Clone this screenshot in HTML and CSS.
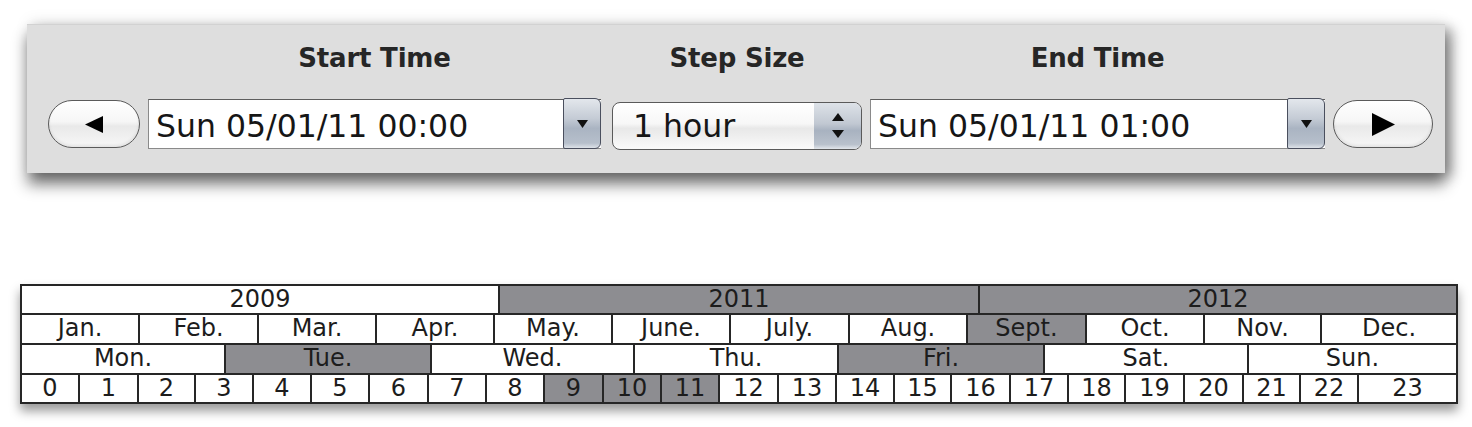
FILE: index.html
```html
<!DOCTYPE html>
<html>
<head>
<meta charset="utf-8">
<link rel="stylesheet" href="styles.css">
</head>
<body>
<div class="panel">
  <button class="pill pill-prev" type="button">
    <svg width="18" height="17" viewBox="0 0 18 17"><polygon points="0,8.5 18,0 18,17" fill="#000"/></svg>
  </button>
  <div class="group group-start">
    <div class="label">Start Time</div>
    <div class="combo">
      <span class="value">Sun 05/01/11 00:00</span>
      <span class="drop"><svg width="11" height="8" viewBox="0 0 11 8"><polygon points="0,0 11,0 5.5,8" fill="#111"/></svg></span>
    </div>
  </div>
  <div class="group group-step">
    <div class="label">Step Size</div>
    <div class="stepper">
      <span class="value">1 hour</span>
      <span class="spin"><svg width="12" height="26" viewBox="0 0 12 26"><polygon points="6,0 12,8 0,8" fill="#111"/><polygon points="0,17 12,17 6,25" fill="#111"/></svg></span>
    </div>
  </div>
  <div class="group group-end">
    <div class="label">End Time</div>
    <div class="combo">
      <span class="value">Sun 05/01/11 01:00</span>
      <span class="drop"><svg width="11" height="8" viewBox="0 0 11 8"><polygon points="0,0 11,0 5.5,8" fill="#111"/></svg></span>
    </div>
  </div>
  <button class="pill pill-next" type="button">
    <svg width="23" height="23" viewBox="0 0 23 23"><polygon points="0,0 23,11.5 0,23" fill="#000"/></svg>
  </button>
</div>

<div class="timeline">
  <div class="row row-years">
    <div class="cell">2009</div>
    <div class="cell on">2011</div>
    <div class="cell on">2012</div>
  </div>
  <div class="row row-months">
    <div class="cell">Jan.</div>
    <div class="cell">Feb.</div>
    <div class="cell">Mar.</div>
    <div class="cell">Apr.</div>
    <div class="cell">May.</div>
    <div class="cell">June.</div>
    <div class="cell">July.</div>
    <div class="cell">Aug.</div>
    <div class="cell on">Sept.</div>
    <div class="cell">Oct.</div>
    <div class="cell">Nov.</div>
    <div class="cell">Dec.</div>
  </div>
  <div class="row row-days">
    <div class="cell">Mon.</div>
    <div class="cell on">Tue.</div>
    <div class="cell">Wed.</div>
    <div class="cell">Thu.</div>
    <div class="cell on">Fri.</div>
    <div class="cell">Sat.</div>
    <div class="cell">Sun.</div>
  </div>
  <div class="row row-hours">
    <div class="cell">0</div>
    <div class="cell">1</div>
    <div class="cell">2</div>
    <div class="cell">3</div>
    <div class="cell">4</div>
    <div class="cell">5</div>
    <div class="cell">6</div>
    <div class="cell">7</div>
    <div class="cell">8</div>
    <div class="cell on">9</div>
    <div class="cell on">10</div>
    <div class="cell on">11</div>
    <div class="cell">12</div>
    <div class="cell">13</div>
    <div class="cell">14</div>
    <div class="cell">15</div>
    <div class="cell">16</div>
    <div class="cell">17</div>
    <div class="cell">18</div>
    <div class="cell">19</div>
    <div class="cell">20</div>
    <div class="cell">21</div>
    <div class="cell">22</div>
    <div class="cell">23</div>
  </div>
</div>
</body>
</html>
```
FILE: styles.css
```css
html, body {
  margin: 0;
  padding: 0;
  background: #ffffff;
}
body {
  font-family: "DejaVu Sans", "Liberation Sans", sans-serif;
  color: #1a1a1a;
  width: 1472px;
  height: 427px;
  overflow: hidden;
}

/* ---------- top control panel ---------- */
.panel {
  margin: 24px 0 0 27px;
  width: 1418px;
  height: 149px;
  box-sizing: border-box;
  padding: 18px 0 0 21px;
  background: #dedede;
  border-top: 1px solid #d2d2d2;
  display: flex;
  align-items: flex-start;
  box-shadow: 0 12px 14px rgba(0, 0, 0, 0.45), 8px 4px 12px rgba(0, 0, 0, 0.3), 0 -4px 14px rgba(0, 0, 0, 0.06);
}
.group {
  display: flex;
  flex-direction: column;
  align-items: center;
  gap: 26px;
}
.label {
  font-weight: bold;
  font-size: 26px;
  line-height: 30px;
  letter-spacing: -0.2px;
  color: #262626;
  white-space: nowrap;
}
.group-start { margin-left: 8px; width: 453px; }
.group-step { margin-left: 11px; width: 250px; }
.group-end { margin-left: 8px; width: 455px; }

.pill {
  margin: 57px 0 0 0;
  padding: 0;
  height: 48px;
  border: 1.5px solid #5a5a5a;
  border-radius: 24px;
  background: linear-gradient(#ffffff 0%, #f6f6f6 45%, #e9e9e9 55%, #f7f7f7 100%);
  display: flex;
  align-items: center;
  justify-content: center;
  box-shadow: inset 0 -2px 3px rgba(0, 0, 0, 0.08);
}
.pill-prev { width: 92px; }
.pill-next { width: 100px; margin-left: 8px; }

.combo {
  width: 100%;
  height: 50px;
  box-sizing: border-box;
  display: flex;
  background: #ffffff;
  border: 1px solid #8a8a8a;
  border-top-color: #5e5e5e;
  border-right: none;
}
.value {
  flex: 1;
  font-size: 31.5px;
  line-height: 48px;
  padding: 2px 0 0 7px;
  color: #161616;
  white-space: nowrap;
}
.drop {
  width: 38px;
  margin: -2px 0 -1px 0;
  box-sizing: border-box;
  border: 1.5px solid #4a4f5e;
  border-radius: 2px 6px 6px 2px;
  background: linear-gradient(#e3e7ec 0%, #c4cbd5 40%, #aab4c2 60%, #b6bfcb 90%, #dde2e8 100%);
  display: flex;
  align-items: center;
  justify-content: center;
}

.stepper {
  width: 100%;
  height: 48px;
  margin-top: 3px;
  box-sizing: border-box;
  display: flex;
  border: 1.5px solid #5a5a5a;
  border-radius: 8px;
  overflow: hidden;
  background: linear-gradient(#ffffff 0%, #f7f7f7 45%, #e8e8e8 55%, #fafafa 100%);
}
.stepper .value {
  padding: 0 0 0 20px;
  line-height: 46px;
}
.spin {
  width: 47px;
  background: linear-gradient(#dde2e8 0%, #c1c8d2 45%, #a8b2c0 60%, #b9c1cc 90%, #e2e6eb 100%);
  display: flex;
  align-items: center;
  justify-content: center;
}

/* ---------- timeline ---------- */
.timeline {
  margin: 111px 0 0 20px;
  width: 1438px;
  box-sizing: border-box;
  border: 2px solid #262626;
  background: #ffffff;
  box-shadow: 0 7px 10px rgba(0, 0, 0, 0.4);
}
.row {
  display: grid;
  border-bottom: 2px solid #262626;
}
.row:last-child { border-bottom: none; }
.row-years { height: 27px; grid-template-columns: 478px 480px 1fr; }
.row-months { height: 28px; grid-template-columns: 118px 119px 118px 118px 118px 118px 119px 118px 119px 118px 117px 1fr; }
.row-days { height: 28px; grid-template-columns: 204px 206px 203px 204px 206px 204px 1fr; }
.row-hours { height: 27px; grid-template-columns: 58px 59px 57px 58px 58px 58px 59px 58px 58px 59px 58px 58px 59px 58px 58px 57px 59px 58px 57px 59px 59px 57px 58px 1fr; }
.cell {
  border-right: 2px solid #262626;
  font-size: 24px;
  line-height: 27px;
  text-align: center;
  color: #1c1c1c;
  white-space: nowrap;
  overflow: hidden;
}
.cell:last-child { border-right: none; }
.cell.on { background: #8d8d91; }
```
